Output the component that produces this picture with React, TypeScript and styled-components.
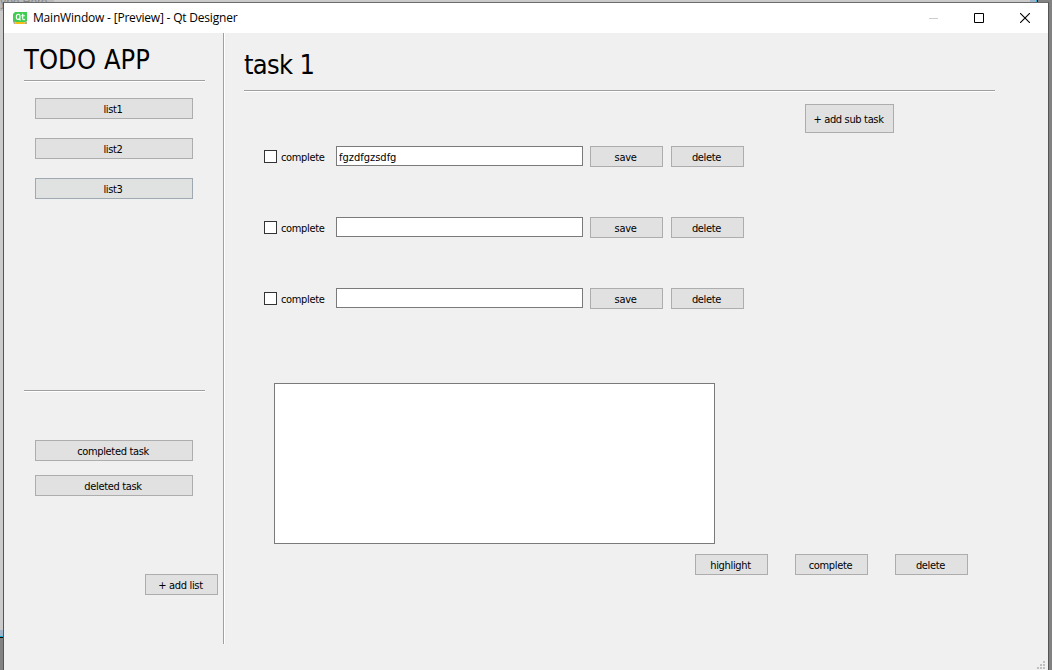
import React from "react";
import styled, { createGlobalStyle } from "styled-components";

const Global = createGlobalStyle`
  * { box-sizing: border-box; }
  html, body, #root { margin: 0; height: 100%; }
  body { overflow: hidden; background: #828282; }
`;

const Desktop = styled.div`
  position: relative;
  width: 1052px;
  height: 670px;
  overflow: hidden;
  background: #828282;
  padding: 2px 3px 0 3px;
  font-family: "DejaVu Sans Condensed", "DejaVu Sans", sans-serif;
  font-stretch: condensed;
  font-size: 11px;
  letter-spacing: -0.34px;
  color: #000;
`;

const Behind = styled.div`
  position: absolute;
  left: 0;
  top: 0;
  width: 1038px;
  height: 638px;
  background: #cbcbcb;
  border-right: 1px solid #000;
  border-bottom: 1px solid #000;
  box-shadow: inset -1px -1px #1fb2d6, inset -7px -7px #9fb4c9;
`;

const BehindText = styled.div`
  position: absolute;
  left: 0;
  top: -5px;
  width: 54px;
  height: 16px;
  font-size: 12px;
  line-height: 14px;
  letter-spacing: -0.2px;
  white-space: nowrap;
  color: #858585;
  background: #b9b9b9;
`;

const Window = styled.div`
  position: relative;
  display: flex;
  flex-direction: column;
  width: 1046px;
  height: 668px;
  background: #f0f0f0;
  border: 1px solid #555;
  border-top-color: #6b6b6b;
  border-bottom: 0;
`;

const TitleBar = styled.header`
  display: flex;
  align-items: center;
  height: 30px;
  flex: none;
  padding-left: 9px;
  background: #fff;
`;

const Title = styled.span`
  flex: 1;
  margin-left: 5px;
  font: 12px/30px "Open Sans", "Noto Sans", sans-serif;
  letter-spacing: -0.2px;
  white-space: nowrap;
`;

const WindowControl = styled.span`
  display: flex;
  align-items: center;
  justify-content: center;
  width: 46px;
  height: 30px;
`;

const Body = styled.div`
  display: flex;
  height: 637px;
`;

const Sidebar = styled.aside`
  display: flex;
  flex-direction: column;
  width: 221px;
  height: 611px;
  padding-left: 20px;
  border-right: 1px solid #fff;
  box-shadow: inset -1px 0 #a0a0a0;
`;

const Main = styled.main`
  display: flex;
  flex-direction: column;
  flex: 1;
  padding-left: 19px;
`;

const Heading = styled.h1<{ $top: number; $height: number; $spacing: number }>`
  margin: ${(p) => p.$top}px 0 0;
  height: ${(p) => p.$height}px;
  font-size: 27px;
  line-height: 32px;
  font-weight: 400;
  letter-spacing: ${(p) => p.$spacing}px;
  white-space: nowrap;
`;

const Rule = styled.div<{ $width: number; $top?: number }>`
  flex: none;
  width: ${(p) => p.$width}px;
  height: 2px;
  margin-top: ${(p) => p.$top ?? 0}px;
  background: #fff;
  border-top: 1px solid #a0a0a0;
`;

const Button = styled.button<{ $width?: number; $height?: number; $hover?: boolean }>`
  flex: none;
  width: ${(p) => p.$width ?? 73}px;
  height: ${(p) => p.$height ?? 21}px;
  padding: 2px 2px 0 0;
  border: 1px solid ${(p) => (p.$hover ? "#9fa9b2" : "#adadad")};
  background: ${(p) => (p.$hover ? "#e0e2e2" : "#e1e1e1")};
  color: #000;
  font: inherit;
  letter-spacing: inherit;
  line-height: 17px;
  white-space: nowrap;
`;

const ButtonStack = styled.div<{ $top: number; $gap: number }>`
  display: flex;
  flex-direction: column;
  gap: ${(p) => p.$gap}px;
  margin: ${(p) => p.$top}px 0 0 11px;
`;

const AddList = styled.div`
  display: flex;
  margin: 78px 0 0 121px;
`;

const AddSubTask = styled.div`
  display: flex;
  margin: 12px 0 0 561px;
`;

const Tasks = styled.div`
  display: flex;
  flex-direction: column;
  gap: 50px;
  margin: 13px 0 0 20px;
`;

const TaskRow = styled.div`
  display: flex;
  align-items: flex-start;
  height: 21px;
`;

const CheckLabel = styled.label`
  display: flex;
  align-items: center;
  width: 72px;
  height: 21px;
  line-height: 21px;
`;

const CheckBox = styled.input`
  appearance: none;
  width: 13px;
  height: 13px;
  margin: 0 4px 0 0;
  border: 1px solid #333;
  background: #fff;
`;

const CheckText = styled.span`
  padding-top: 1px;
`;

const TextField = styled.input`
  width: 247px;
  height: 20px;
  margin-right: 7px;
  padding: 2px 2px 0;
  border: 1px solid #7a7a7a;
  border-radius: 0;
  background: #fff;
  font: inherit;
  letter-spacing: 0;
  color: #000;
  outline: 0;

  & + button { margin-right: 8px; }
`;

const Notes = styled.textarea`
  display: block;
  flex: none;
  width: 441px;
  height: 161px;
  margin: 74px 0 0 30px;
  border: 1px solid #7a7a7a;
  background: #fff;
  resize: none;
  outline: 0;
`;

const Actions = styled.div`
  display: flex;
  gap: 27px;
  margin: 10px 0 0 451px;
`;

const SizeGrip = styled.svg`
  position: absolute;
  right: 3px;
  bottom: 1px;
`;

const QtLogo = () => (
  <svg width="15" height="13" viewBox="0 0 15 13">
    <path d="M2 0H14V9L12.5 10H0V2Z" fill="#41cd52" />
    <path d="M0 9.5H2L3 12H1ZM12 9.5H14V12H11Z" fill="#b9aa91" />
    <path d="M2.5 10H11.5V12H2.5Z" fill="#f5bf12" />
    <ellipse cx="5.2" cy="4.9" rx="1.9" ry="2.6" fill="none" stroke="#fff" strokeWidth="1.1" />
    <path d="M5.8 6.4L7.5 8.4M9.7 1.8V6.6Q9.7 8 11.8 7.4M8.3 3.7H11.8" fill="none" stroke="#fff" strokeWidth="1.1" />
  </svg>
);

const tasks = ["fgzdfgzsdfg", "", ""];

export default function App() {
  return (
    <>
      <Global />
      <Desktop>
        <Behind>
          <BehindText>ype Here</BehindText>
        </Behind>
        <Window>
          <TitleBar>
            <QtLogo />
            <Title>MainWindow - [Preview] - Qt Designer</Title>
            <WindowControl>
              <svg width="10" height="10"><path d="M1 5.5H11" stroke="#ccc" /></svg>
            </WindowControl>
            <WindowControl>
              <svg width="10" height="10"><path d="M.5 .5H9.5V9.5H.5Z" fill="none" stroke="#000" /></svg>
            </WindowControl>
            <WindowControl>
              <svg width="10" height="10"><path d="M0 0L10 10M10 0L0 10" stroke="#000" strokeWidth="1.1" /></svg>
            </WindowControl>
          </TitleBar>
          <Body>
            <Sidebar>
              <Heading $top={11} $height={36} $spacing={0.08}>TODO APP</Heading>
              <Rule $width={181} />
              <ButtonStack $top={16} $gap={19}>
                <Button $width={158}>list1</Button>
                <Button $width={158}>list2</Button>
                <Button $width={158} $hover>list3</Button>
              </ButtonStack>
              <Rule $width={181} $top={191} />
              <ButtonStack $top={48} $gap={14}>
                <Button $width={158}>completed task</Button>
                <Button $width={158}>deleted task</Button>
              </ButtonStack>
              <AddList>
                <Button>+ add list</Button>
              </AddList>
            </Sidebar>
            <Main>
              <Heading $top={16} $height={41} $spacing={-0.65}>task 1</Heading>
              <Rule $width={751} />
              <AddSubTask>
                <Button $width={89} $height={29}>+ add sub task</Button>
              </AddSubTask>
              <Tasks>
                {tasks.map((value, i) => (
                  <TaskRow key={i}>
                    <CheckLabel>
                      <CheckBox type="checkbox" />
                      <CheckText>complete</CheckText>
                    </CheckLabel>
                    <TextField defaultValue={value} />
                    <Button>save</Button>
                    <Button>delete</Button>
                  </TaskRow>
                ))}
              </Tasks>
              <Notes />
              <Actions>
                <Button>highlight</Button>
                <Button>complete</Button>
                <Button>delete</Button>
              </Actions>
            </Main>
          </Body>
          <SizeGrip width="8" height="8" viewBox="0 0 8 8">
            <path d="M6 0h2v2h-2zM3 3h2v2h-2zM6 3h2v2h-2zM0 6h2v2h-2zM3 6h2v2h-2zM6 6h2v2h-2z" fill="#bfbfbf" />
          </SizeGrip>
        </Window>
      </Desktop>
    </>
  );
}
